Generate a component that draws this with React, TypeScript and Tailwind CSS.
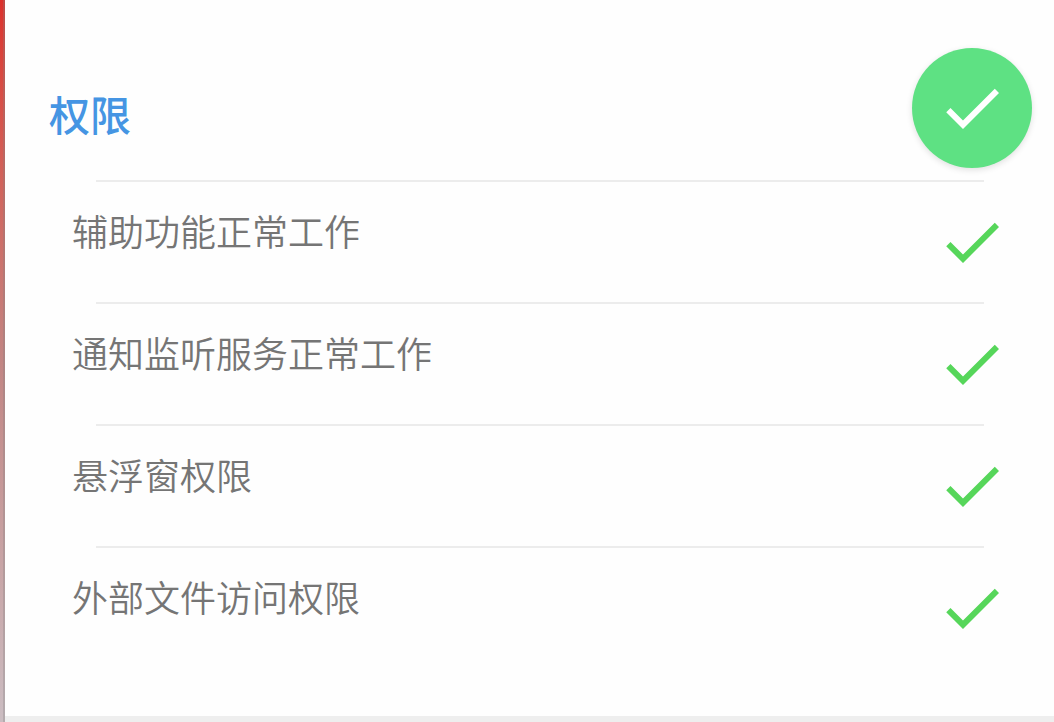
const permissions = [
  { id: 'accessibility', label: '辅助功能正常工作' },
  { id: 'notifications', label: '通知监听服务正常工作' },
  { id: 'overlay', label: '悬浮窗权限' },
  { id: 'storage', label: '外部文件访问权限' },
];

export default function App() {
  return (
    <div className="flex min-h-screen bg-[#eeeeee] font-['Noto_Sans_CJK_SC',sans-serif]">
      <div className="w-[5px] shrink-0 border-r-2 border-[#808080]/30 bg-linear-to-b from-[#dc2f2b] via-[#c28583] to-[#cbbdc2] bg-origin-border" />
      <main className="min-w-0 flex-1">
        <section className="bg-[#fefefe] pt-12 pb-12">
          <header className="flex items-center justify-between pr-[22px] pb-3 pl-11">
            <h1 className="pt-2.5 text-[41px] leading-[48px] font-medium text-[#4595e3]">
              权限
            </h1>
            <button
              type="button"
              aria-label="权限正常"
              className="flex size-[120px] items-center justify-center rounded-full bg-[#5ee183] text-white shadow-[0_2px_6px_rgba(0,0,0,0.12)]"
            >
              <CheckIcon />
            </button>
          </header>
          <ul>
            {permissions.map((permission) => (
              <PermissionRow key={permission.id} label={permission.label} />
            ))}
          </ul>
        </section>
      </main>
    </div>
  );
}

function PermissionRow({ label }: { label: string }) {
  return (
    <li>
      <div className="mr-[70px] ml-[91px] h-0.5 bg-[#ececec]" />
      <div className="flex items-start justify-between py-6 pr-[46px] pl-[67px]">
        <span className="text-[36px] leading-[48px] font-[350] text-[#757575]">
          {label}
        </span>
        <span className="text-[#56d65a]">
          <CheckIcon />
        </span>
      </div>
    </li>
  );
}

function CheckIcon() {
  return (
    <svg
      viewBox="0 0 24 24"
      fill="currentColor"
      aria-hidden="true"
      className="size-[72px]"
    >
      <path d="M9 16.17 4.83 12l-1.42 1.41L9 19 21 7l-1.41-1.41z" />
    </svg>
  );
}
